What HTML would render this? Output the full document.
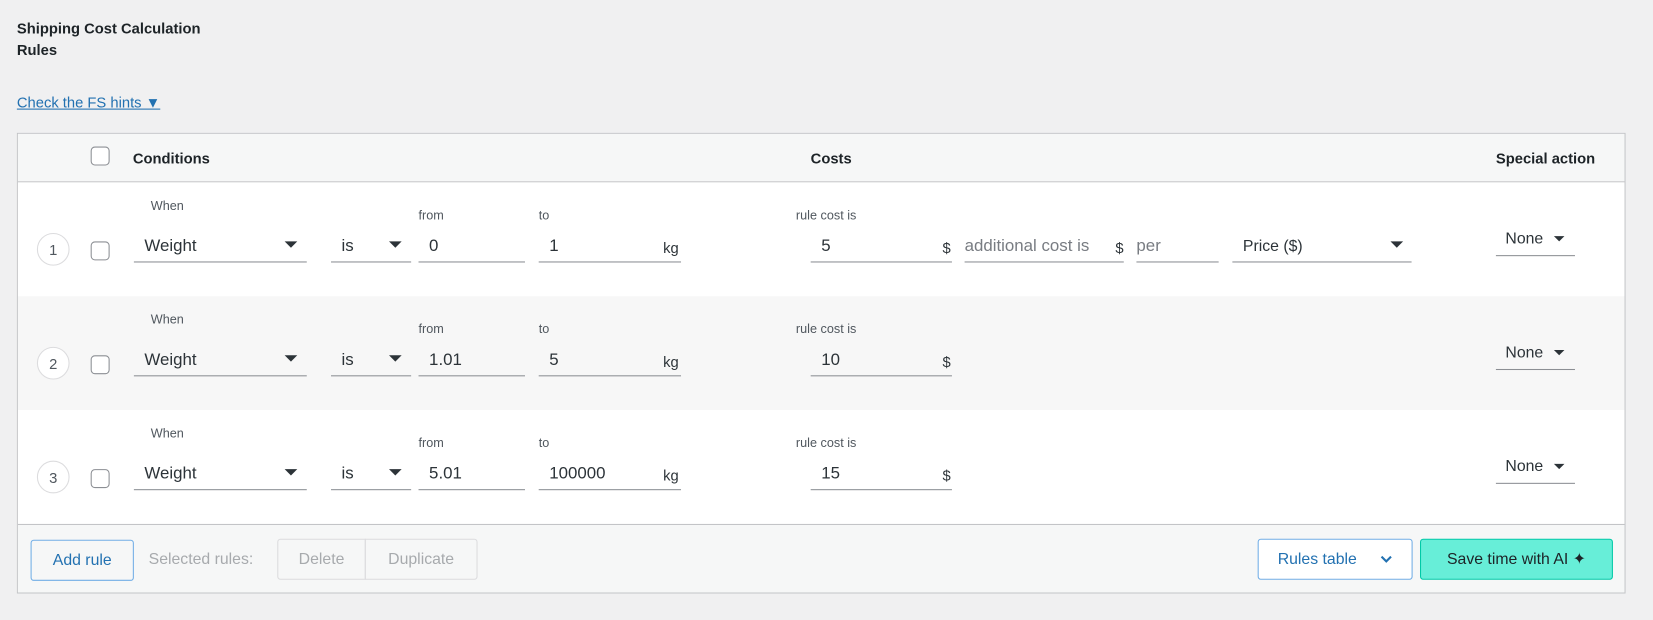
<!DOCTYPE html>
<html><head><meta charset="utf-8"><style>
html,body{margin:0;padding:0;background:#f0f0f1;width:1653px;height:620px;overflow:hidden}
#w{position:absolute;left:0;top:0;width:1568px;height:588px;transform:scale(1.0542);transform-origin:0 0;font-family:"Liberation Sans",sans-serif;color:#1d2327}
.a{position:absolute}
.h{font-weight:bold;font-size:14px}
.lbl{position:absolute;font-size:12px;color:#50575e}
.in{position:absolute;height:27px;border-bottom:1px solid #8c8f94;font-size:16px;color:#2c3338;line-height:23px;box-sizing:border-box;padding-left:10px}
.car{position:absolute;width:0;height:0;border-left:6px solid transparent;border-right:6px solid transparent;border-top:6px solid #2c3338}
.cb{position:absolute;width:16px;height:16px;border:1px solid #8c8f94;border-radius:4px;background:#fff}
.circ{position:absolute;width:31px;height:31px;border:1px solid #dcdcde;border-radius:50%;text-align:center;line-height:31px;font-size:14px;color:#50575e;background:#fff;box-sizing:border-box}
.unit{position:absolute;font-size:14px;color:#2c3338}
.row{position:absolute;left:17px;width:1524px;height:108px}
.btn{position:absolute;box-sizing:border-box;border:1px solid;border-radius:3px;font-size:15px;text-align:center;line-height:37px;height:39px}
.nc{position:absolute;width:0;height:0;border-left:5px solid transparent;border-right:5px solid transparent;border-top:5px solid #2c3338}
</style></head><body><div id="w">
<div class="a h" style="left:16px;top:17px;line-height:20px">Shipping Cost Calculation<br>Rules</div>
<div class="a" style="left:16px;top:89px;font-size:14px;color:#2271b1;text-decoration:underline">Check the FS hints ▼</div>
<div class="a" style="left:16px;top:126px;width:1526px;height:437px;border:1px solid #c3c4c7;box-sizing:border-box;background:#fff"></div>
<div class="a" style="left:17px;top:127px;width:1524px;height:46px;background:#f6f7f7;border-bottom:1px solid #c3c4c7;box-sizing:border-box"></div>
<div class="cb" style="left:86px;top:139px"></div>
<div class="a h" style="left:126px;top:142px">Conditions</div>
<div class="a h" style="left:769px;top:142px">Costs</div>
<div class="a h" style="left:1419px;top:142px">Special action</div>

<div class="row" style="top:173px;background:#fff"></div>
<div class="row" style="top:281px;background:#f7f7f7"></div>
<div class="row" style="top:389px;background:#fff"></div>

<!-- row 1 -->
<div class="circ" style="left:35px;top:221px">1</div><div class="cb" style="left:86px;top:229px"></div>
<div class="lbl" style="left:143px;top:188px">When</div>
<div class="in" style="left:127px;top:222px;width:164px">Weight</div><div class="car" style="left:270px;top:229px"></div>
<div class="in" style="left:314px;top:222px;width:76px">is</div><div class="car" style="left:369px;top:229px"></div>
<div class="lbl" style="left:397px;top:197px">from</div><div class="in" style="left:397px;top:222px;width:101px">0</div>
<div class="lbl" style="left:511px;top:197px">to</div><div class="in" style="left:511px;top:222px;width:135px">1</div><div class="unit" style="left:629px;top:227px">kg</div>
<div class="lbl" style="left:755px;top:197px">rule cost is</div><div class="in" style="left:769px;top:222px;width:134px">5</div><div class="unit" style="left:894px;top:227px">$</div>
<div class="in" style="left:915px;top:222px;width:151px;padding-left:0;color:#787c82">additional cost is</div><div class="unit" style="left:1058px;top:227px">$</div>
<div class="in" style="left:1078px;top:222px;width:78px;padding-left:0;color:#787c82">per</div>
<div class="in" style="left:1169px;top:222px;width:170px;font-size:15px">Price ($)</div><div class="car" style="left:1319px;top:229px"></div>
<div class="in" style="left:1419px;top:216px;width:75px;font-size:15px;padding-left:9px;line-height:21px">None</div><div class="nc" style="left:1474px;top:224px"></div>

<!-- row 2 -->
<div class="circ" style="left:35px;top:329px">2</div><div class="cb" style="left:86px;top:337px"></div>
<div class="lbl" style="left:143px;top:296px">When</div>
<div class="in" style="left:127px;top:330px;width:164px">Weight</div><div class="car" style="left:270px;top:337px"></div>
<div class="in" style="left:314px;top:330px;width:76px">is</div><div class="car" style="left:369px;top:337px"></div>
<div class="lbl" style="left:397px;top:305px">from</div><div class="in" style="left:397px;top:330px;width:101px">1.01</div>
<div class="lbl" style="left:511px;top:305px">to</div><div class="in" style="left:511px;top:330px;width:135px">5</div><div class="unit" style="left:629px;top:335px">kg</div>
<div class="lbl" style="left:755px;top:305px">rule cost is</div><div class="in" style="left:769px;top:330px;width:134px">10</div><div class="unit" style="left:894px;top:335px">$</div>
<div class="in" style="left:1419px;top:324px;width:75px;font-size:15px;padding-left:9px;line-height:21px">None</div><div class="nc" style="left:1474px;top:332px"></div>

<!-- row 3 -->
<div class="circ" style="left:35px;top:437px">3</div><div class="cb" style="left:86px;top:445px"></div>
<div class="lbl" style="left:143px;top:404px">When</div>
<div class="in" style="left:127px;top:438px;width:164px">Weight</div><div class="car" style="left:270px;top:445px"></div>
<div class="in" style="left:314px;top:438px;width:76px">is</div><div class="car" style="left:369px;top:445px"></div>
<div class="lbl" style="left:397px;top:413px">from</div><div class="in" style="left:397px;top:438px;width:101px">5.01</div>
<div class="lbl" style="left:511px;top:413px">to</div><div class="in" style="left:511px;top:438px;width:135px">100000</div><div class="unit" style="left:629px;top:443px">kg</div>
<div class="lbl" style="left:755px;top:413px">rule cost is</div><div class="in" style="left:769px;top:438px;width:134px">15</div><div class="unit" style="left:894px;top:443px">$</div>
<div class="in" style="left:1419px;top:432px;width:75px;font-size:15px;padding-left:9px;line-height:21px">None</div><div class="nc" style="left:1474px;top:440px"></div>

<!-- footer -->
<div class="a" style="left:17px;top:497px;width:1524px;height:65px;background:#f6f7f7;border-top:1px solid #c3c4c7;box-sizing:border-box"></div>
<div class="btn" style="left:29px;top:512px;width:98px;border-color:#72aee6;color:#2271b1;background:#f6f7f7">Add rule</div>
<div class="a" style="left:141px;top:522px;font-size:15px;color:#a7aaad">Selected rules:</div>
<div class="btn" style="left:263px;top:511px;width:84px;border-color:#dcdcde;color:#a7aaad;border-radius:3px 0 0 3px">Delete</div>
<div class="btn" style="left:346px;top:511px;width:107px;border-color:#dcdcde;color:#a7aaad;border-radius:0 3px 3px 0">Duplicate</div>
<div class="btn" style="left:1193px;top:511px;width:147px;border-color:#72aee6;color:#2271b1;background:#fff;text-align:left;padding-left:18px">Rules table
<svg style="position:absolute;left:115px;top:14px" width="12" height="9" viewBox="0 0 12 9"><path d="M1.5 2 L6 6.5 L10.5 2" fill="none" stroke="#2271b1" stroke-width="2"/></svg></div>
<div class="btn" style="left:1347px;top:511px;width:183px;border-color:#00c9a7;background:#67eed8;color:#1d2327">Save time with AI ✦</div>
</div></body></html>
